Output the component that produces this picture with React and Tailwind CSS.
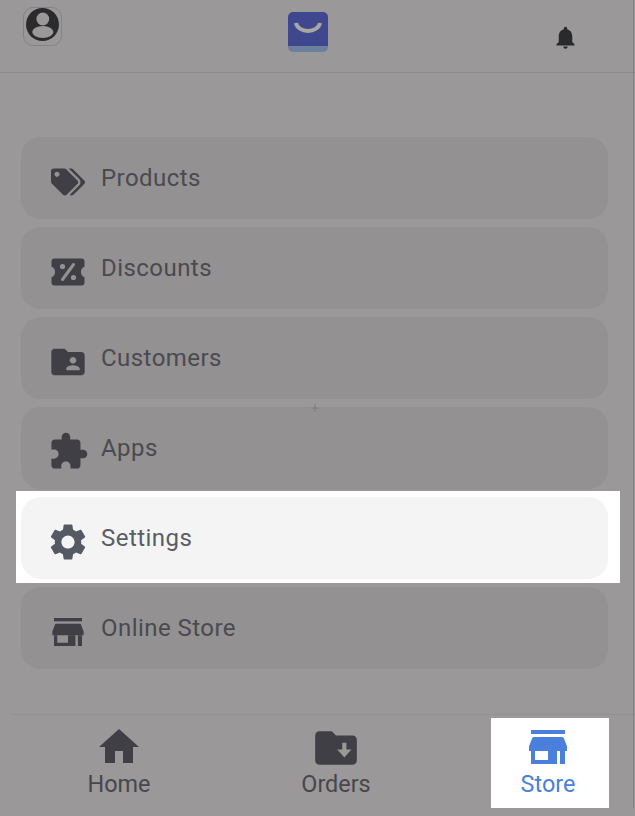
import React from "react";
import { FaTags } from "react-icons/fa";
import { MdFolderShared, MdExtension, MdSettings, MdHome, MdNotifications } from "react-icons/md";

function DiscountIcon({ cls, cut }) {
  return (
    <svg width="40" height="40" viewBox="0 0 40 40" className={cls}>
      <path d="M6.5 6.5h27a3 3 0 0 1 3 3v5.5a3.5 5 0 0 0 0 10v5.5a3 3 0 0 1-3 3h-27a3 3 0 0 1-3-3v-5.5a3.5 5 0 0 0 0-10v-5.5a3 3 0 0 1 3-3z" fill="currentColor" />
      <path d="M25.5 12.5L14.5 27.5" stroke={cut} strokeWidth="3" strokeLinecap="round" />
      <circle cx="14.5" cy="14.5" r="2.6" fill={cut} />
      <circle cx="25.5" cy="25.5" r="2.6" fill={cut} />
    </svg>
  );
}

function StoreIcon({ w, h, cls }) {
  return (
    <svg width={w} height={h} viewBox="0 0 38 34" className={`shrink-0 ${cls}`}>
      <path fill="currentColor" d="M2 0h34v4H2z" />
      <path fill="currentColor" d="M5 7h28a2 2 0 0 1 2 1.500l3 8V21H0v-4.500l3-8A2 2 0 0 1 5 7z" />
      <path fill="currentColor" fillRule="evenodd" d="M2 21h26v13H2zM6 21h13v9H6z" />
      <path fill="currentColor" d="M31 21h5v13h-5z" />
    </svg>
  );
}

function OrdersIcon() {
  return (
    <svg width="50" height="50" viewBox="0 0 24 24" className="text-[#3f3f45]">
      <path fill="currentColor" d="M10 4H4c-1.1 0-1.99.9-1.99 2L2 18c0 1.1.9 2 2 2h16c1.1 0 2-.9 2-2V8c0-1.1-.9-2-2-2h-8l-2-2z" />
      <path fill="#9a9899" d="M15 9.5h2v3.2h2.4L16 16.6l-3.4-3.9H15z" />
    </svg>
  );
}

function Logo() {
  return (
    <svg width="40" height="40" viewBox="0 0 40 40">
      <path d="M5 0h30a5 5 0 0 1 5 5v29H0V5a5 5 0 0 1 5-5z" fill="#3f478f" />
      <path d="M0 34h40v1a5 5 0 0 1-5 5H5a5 5 0 0 1-5-5z" fill="#6c7f9c" />
      <path d="M8 11c2 10.500 22 10.500 24 0" fill="none" stroke="#a9a9a3" strokeWidth="4" />
    </svg>
  );
}

function Avatar() {
  return (
    <div className="w-[39px] h-[39px] rounded-[10px] border border-[#858385] flex justify-center">
      <svg width="33" height="33" viewBox="0 0 33 33" className="shrink-0">
        <circle cx="16.5" cy="16.5" r="16.5" fill="#2b2b2e" />
        <circle cx="16.8" cy="11" r="6.4" fill="#9a9899" />
        <ellipse cx="16.8" cy="24" rx="10.6" ry="6" fill="#9a9899" />
      </svg>
    </div>
  );
}

function Row({ icon, label, light }) {
  return (
    <div className={`h-[82px] rounded-[20px] flex items-center pl-[27px] gap-[13px] ${light ? "bg-[#f4f4f5] text-[#5a5d66]" : "bg-[#939192] text-[#4a4a50]"}`}>
      <div className="w-[40px] h-[40px] mt-[7px] flex items-center justify-center shrink-0">{icon}</div>
      <span className="text-[24px] leading-[28px] tracking-[0.45px]">{label}</span>
    </div>
  );
}

export default function App() {
  const dark = "shrink-0 text-[#3f3f45]";
  return (
    <div className="relative w-[635px] h-[816px] overflow-hidden bg-[#9a9899] font-['Roboto',sans-serif]">
      <header className="h-[73px] border-b border-[#8c8a8b] flex items-start">
        <div className="ml-[23px] mt-[7px]"><Avatar /></div>
        <div className="ml-[226px] mt-[12px]"><Logo /></div>
        <div className="ml-[224px] mt-[24px] text-[#2a2a2d]"><MdNotifications size={27} /></div>
      </header>

      <main className="pt-[64px] pl-[21px] pr-[27px] flex flex-col gap-2">
        <Row label="Products" icon={<FaTags size={34} className={dark} />} />
        <Row label="Discounts" icon={<DiscountIcon cls={dark} cut="#939192" />} />
        <Row label="Customers" icon={<MdFolderShared size={40} className={dark} />} />
        <Row label="Apps" icon={<MdExtension size={41} className={dark} />} />
        <div className="relative bg-white ml-[-5px] mr-[-12px] mt-[-6px] mb-[-4px] pl-[5px] pr-[12px] pt-[6px] pb-[4px]">
          <Row light label="Settings" icon={<MdSettings size={44} className="shrink-0 text-[#555964]" />} />
        </div>
        <Row label="Online Store" icon={<StoreIcon w={32} h={28} cls="text-[#3f3f45]" />} />
      </main>

      <nav className="mt-[45px] ml-[12px] border-t border-[#929091] pt-[3px] flex items-start">
        <div className="ml-[48px] w-[118px] h-[90px] flex flex-col items-center text-[#47474b]">
          <div className="h-[52px] pt-[5px]"><MdHome size={48} className={dark} /></div>
          <span className="text-[23.4px] leading-[28px]">Home</span>
        </div>
        <div className="ml-[99px] w-[118px] h-[90px] flex flex-col items-center text-[#47474b]">
          <div className="h-[52px] pt-[5px]"><OrdersIcon /></div>
          <span className="text-[23.4px] leading-[28px]">Orders</span>
        </div>
        <div className="ml-[96px] w-[118px] h-[90px] pr-[4px] bg-white flex flex-col items-center text-[#4a7fdc]">
          <div className="h-[52px] pt-[12px]"><StoreIcon w={38} h={34} /></div>
          <span className="text-[23.4px] leading-[28px]">Store</span>
        </div>
      </nav>

      <svg width="10" height="10" viewBox="0 0 10 10" className="absolute left-[310px] top-[403px]">
        <path d="M5 1v8M1 5h8" stroke="#7f7d7e" strokeWidth="1" />
      </svg>
      <div className="absolute right-[1px] top-0 bottom-[8px] w-px bg-[#858385]" />
    </div>
  );
}
